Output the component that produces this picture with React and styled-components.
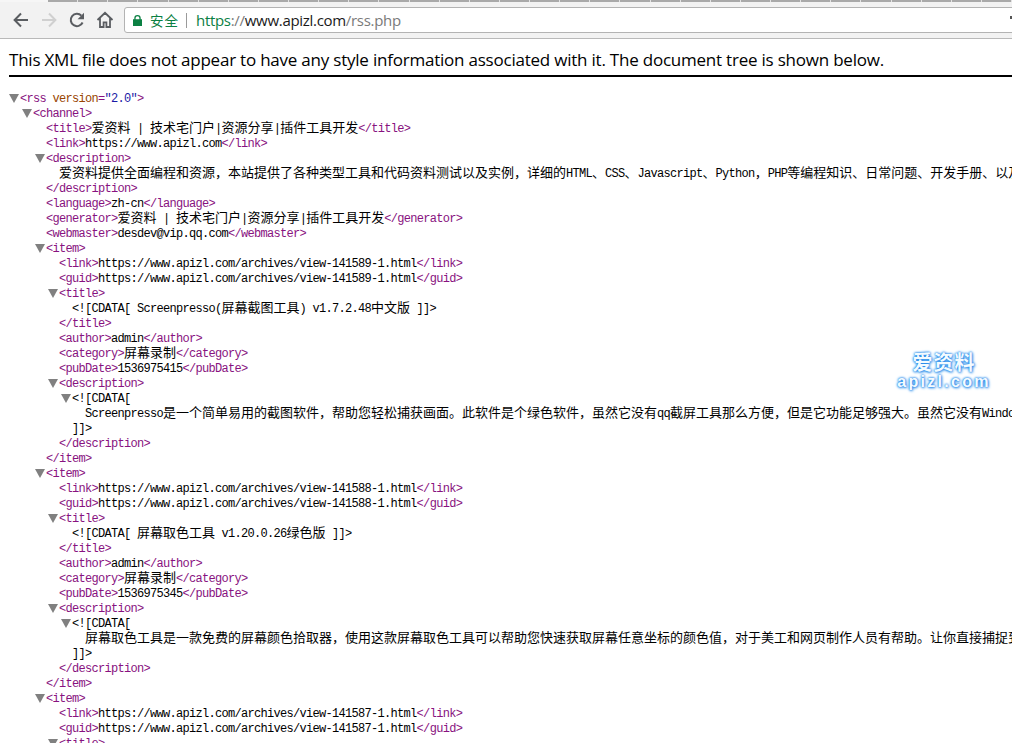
import styled, { createGlobalStyle } from 'styled-components'

const GlobalStyle = createGlobalStyle`
html, body {
  margin: 0;
  height: 100%;
  overflow: hidden;
  background: white;
}
`

const Page = styled.div`
position: relative;
width: 1012px;
height: 743px;
overflow: hidden;
background: white;
`

const TabStrip = styled.div`
display: flex;
height: 2px;
padding-left: 48px;
background: #f6f6f6;
`

const Tab = styled.div`
width: 30px;
background: #a9a9a9;
border-right: 1px solid #e4e4e4;
`

const Toolbar = styled.div`
display: flex;
align-items: center;
height: 36px;
padding-left: 7px;
background: #f2f2f2;
border-bottom: 1px solid #b9b9b9;
box-sizing: content-box;
overflow: hidden;
`

const NavButton = styled.div`
display: flex;
align-items: center;
justify-content: center;
flex: none;
width: 28px;
height: 28px;
color: ${(p) => (p.$disabled ? '#d0d0d0' : '#5a5d61')};
`

const Omnibox = styled.div`
display: flex;
align-items: center;
flex: none;
width: 900px;
height: 26px;
margin-left: 5px;
padding: 0 8px 0 8px;
box-sizing: border-box;
background: white;
border: 1px solid #b3b3b3;
border-radius: 3px;
font-family: "Open Sans", "Noto Sans CJK SC", sans-serif;
font-size: 15px;
letter-spacing: -0.3px;
white-space: nowrap;
`

const Secure = styled.span`
flex: none;
margin-left: 8px;
color: #0b8043;
font-family: "Noto Sans CJK SC", sans-serif;
font-size: 13.5px;
letter-spacing: 1px;
`

const Divider = styled.span`
flex: none;
width: 1px;
height: 15px;
margin: 0 9px 0 7px;
background: #9a9a9a;
`

const Url = styled.span`
flex: none;
color: ${(p) => p.$color};
white-space: pre;
`

const Dropdown = styled.svg`
flex: none;
margin-left: auto;
`

const Notice = styled.div`
margin: 0 0 0 9px;
width: 1003px;
height: 38px;
border-bottom: 2px solid black;
box-sizing: border-box;
font-family: "Open Sans", "Noto Sans", sans-serif;
font-size: 17px;
letter-spacing: -0.22px;
line-height: 42px;
color: black;
white-space: nowrap;
`

const Tree = styled.div`
padding: 15px 0 0 20px;
font-family: "Liberation Mono", "Noto Sans CJK SC", monospace;
font-size: 12px;
letter-spacing: -0.7px;
color: black;
white-space: nowrap;
`

const Row = styled.div`
height: 15px;
line-height: 15px;
white-space: pre;
`

const Nested = styled.div`
padding-left: 13px;
`

const Arrow = styled.span`
display: inline-block;
width: 0;
height: 0;
margin-left: -11px;
margin-right: 1px;
border-style: solid;
border-width: 9px 5px 0 5px;
border-color: #808080 transparent transparent transparent;
vertical-align: -1px;
`

const Tag = styled.span`
color: #881280;
`

const AttrName = styled.span`
color: #994500;
`

const AttrValue = styled.span`
color: #1a1aa6;
`

const Cjk = styled.span`
display: inline-block;
height: 15px;
font-family: "Noto Sans CJK SC", sans-serif;
font-size: 13px;
letter-spacing: 0;
line-height: 10px;
vertical-align: top;
`

const Watermark = styled.div`
position: absolute;
top: 351px;
left: 892px;
width: 104px;
text-align: center;
color: #f4fbff;
font-weight: bold;
text-shadow: 0 0 2px #1f86ea, 0 0 3px #1f86ea, 1px 1px 3px #4a9fee;
`

const WatermarkTitle = styled.div`
font-family: "Noto Sans CJK SC", sans-serif;
font-size: 20px;
line-height: 22px;
letter-spacing: 1px;
`

const WatermarkSite = styled.div`
margin-top: 1px;
font-family: "Liberation Sans", sans-serif;
font-size: 16px;
line-height: 15px;
letter-spacing: 2.3px;
`

// splits a string so the han runs keep their full 13px width next to the mono latin
const Text = ({ children }) =>
  children.split(/([\u3000-\u9fff\uff00-\uffef]+)/).map((part, i) =>
    i % 2 ? <Cjk key={i}>{part}</Cjk> : part
  )

const Leaf = ({ name, children }) => (
  <Row>
    <Tag>&lt;{name}&gt;</Tag>
    <Text>{children}</Text>
    <Tag>&lt;/{name}&gt;</Tag>
  </Row>
)

const Branch = ({ name, attrs, children }) => (
  <>
    <Row>
      <Arrow />
      <Tag>&lt;{name}</Tag>
      {attrs}
      <Tag>&gt;</Tag>
    </Row>
    <Nested>{children}</Nested>
    <Row>
      <Tag>&lt;/{name}&gt;</Tag>
    </Row>
  </>
)

const Cdata = ({ text }) => (
  <>
    <Row>
      <Arrow />
      &lt;![CDATA[
    </Row>
    <Nested>
      <Row>
        <Text>{text}</Text>
      </Row>
    </Nested>
    <Row>]]&gt;</Row>
  </>
)

const Item = ({ id, title, pubDate, description }) => {
  const url = `https://www.apizl.com/archives/view-${id}-1.html`
  return (
    <Branch name="item">
      <Leaf name="link">{url}</Leaf>
      <Leaf name="guid">{url}</Leaf>
      <Branch name="title">
        <Row>
          &lt;![CDATA[ <Text>{title}</Text> ]]&gt;
        </Row>
      </Branch>
      <Leaf name="author">admin</Leaf>
      <Leaf name="category">屏幕录制</Leaf>
      <Leaf name="pubDate">{pubDate}</Leaf>
      <Branch name="description">
        <Cdata text={description} />
      </Branch>
    </Branch>
  )
}

const items = [
  {
    id: 141589,
    title: 'Screenpresso(屏幕截图工具) v1.7.2.48中文版',
    pubDate: '1536975415',
    description:
      'Screenpresso是一个简单易用的截图软件，帮助您轻松捕获画面。此软件是个绿色软件，虽然它没有qq截屏工具那么方便，但是它功能足够强大。虽然它没有Windows',
  },
  {
    id: 141588,
    title: '屏幕取色工具 v1.20.0.26绿色版',
    pubDate: '1536975345',
    description:
      '屏幕取色工具是一款免费的屏幕颜色拾取器，使用这款屏幕取色工具可以帮助您快速获取屏幕任意坐标的颜色值，对于美工和网页制作人员有帮助。让你直接捕捉到',
  },
]

const siteName = '爱资料 | 技术宅门户|资源分享|插件工具开发'

function App() {
  return (
    <Page>
      <GlobalStyle />
      <TabStrip>
        {Array.from({ length: 32 }, (_, i) => (
          <Tab key={i} />
        ))}
      </TabStrip>
      <Toolbar>
        <NavButton>
          <svg width="16" height="16" viewBox="0 0 16 16" fill="none" stroke="currentColor" strokeWidth="2">
            <path d="M15 8H2M8 1.5 1.6 8 8 14.5" />
          </svg>
        </NavButton>
        <NavButton $disabled>
          <svg width="16" height="16" viewBox="0 0 16 16" fill="none" stroke="currentColor" strokeWidth="2">
            <path d="M1 8h13M8 1.5 14.4 8 8 14.5" />
          </svg>
        </NavButton>
        <NavButton>
          <svg width="16" height="16" viewBox="0 0 16 16" fill="none" stroke="currentColor" strokeWidth="2">
            <path d="M13.6 10.5A6.2 6.2 0 1 1 12.4 3.6" />
            <path d="M15 .8v6.4H8.6z" fill="currentColor" stroke="none" />
          </svg>
        </NavButton>
        <NavButton>
          <svg width="18" height="18" viewBox="0 0 18 18" fill="none" stroke="currentColor" strokeWidth="1.8">
            <path d="M1.5 9 9 1.8 16.5 9M4 7.2V16h3.6v-4.6h2.8V16H14V7.2" />
          </svg>
        </NavButton>
        <Omnibox>
          <svg width="9" height="11" viewBox="0 0 9 11">
            <path d="M0 4.2h1.3V3a3.2 3 0 0 1 6.4 0v1.2H9V11H0zM2.6 4.2h3.8V3a1.9 1.8 0 0 0-3.8 0z" fill="#0b8043" />
          </svg>
          <Secure>安全</Secure>
          <Divider />
          <Url $color="#0b8043">https</Url>
          <Url $color="#7a7a7a">://</Url>
          <Url $color="#1a1a1a">www.apizl.com</Url>
          <Url $color="#7a7a7a">/rss.php</Url>
          <Dropdown width="5" height="8" viewBox="0 0 5 8">
            <path d="M0 0h5v3H3.5v5H2V3H0z" fill="#555" />
          </Dropdown>
        </Omnibox>
      </Toolbar>
      <Notice>This XML file does not appear to have any style information associated with it. The document tree is shown below.</Notice>
      <Tree>
        <Branch
          name="rss"
          attrs={
            <>
              {' '}
              <AttrName>version</AttrName>
              <Tag>=</Tag>
              <AttrValue>"2.0"</AttrValue>
            </>
          }
        >
          <Branch name="channel">
            <Leaf name="title">{siteName}</Leaf>
            <Leaf name="link">https://www.apizl.com</Leaf>
            <Branch name="description">
              <Row>
                <Text>爱资料提供全面编程和资源，本站提供了各种类型工具和代码资料测试以及实例，详细的HTML、CSS、Javascript、Python，PHP等编程知识、日常问题、开发手册、以及</Text>
              </Row>
            </Branch>
            <Leaf name="language">zh-cn</Leaf>
            <Leaf name="generator">{siteName}</Leaf>
            <Leaf name="webmaster">desdev@vip.qq.com</Leaf>
            {items.map((item) => (
              <Item key={item.id} {...item} />
            ))}
            <Branch name="item">
              <Leaf name="link">https://www.apizl.com/archives/view-141587-1.html</Leaf>
              <Leaf name="guid">https://www.apizl.com/archives/view-141587-1.html</Leaf>
              <Branch name="title">
                <Row />
              </Branch>
            </Branch>
          </Branch>
        </Branch>
      </Tree>
      <Watermark>
        <WatermarkTitle>爱资料</WatermarkTitle>
        <WatermarkSite>apizl.com</WatermarkSite>
      </Watermark>
    </Page>
  )
}

export default App
